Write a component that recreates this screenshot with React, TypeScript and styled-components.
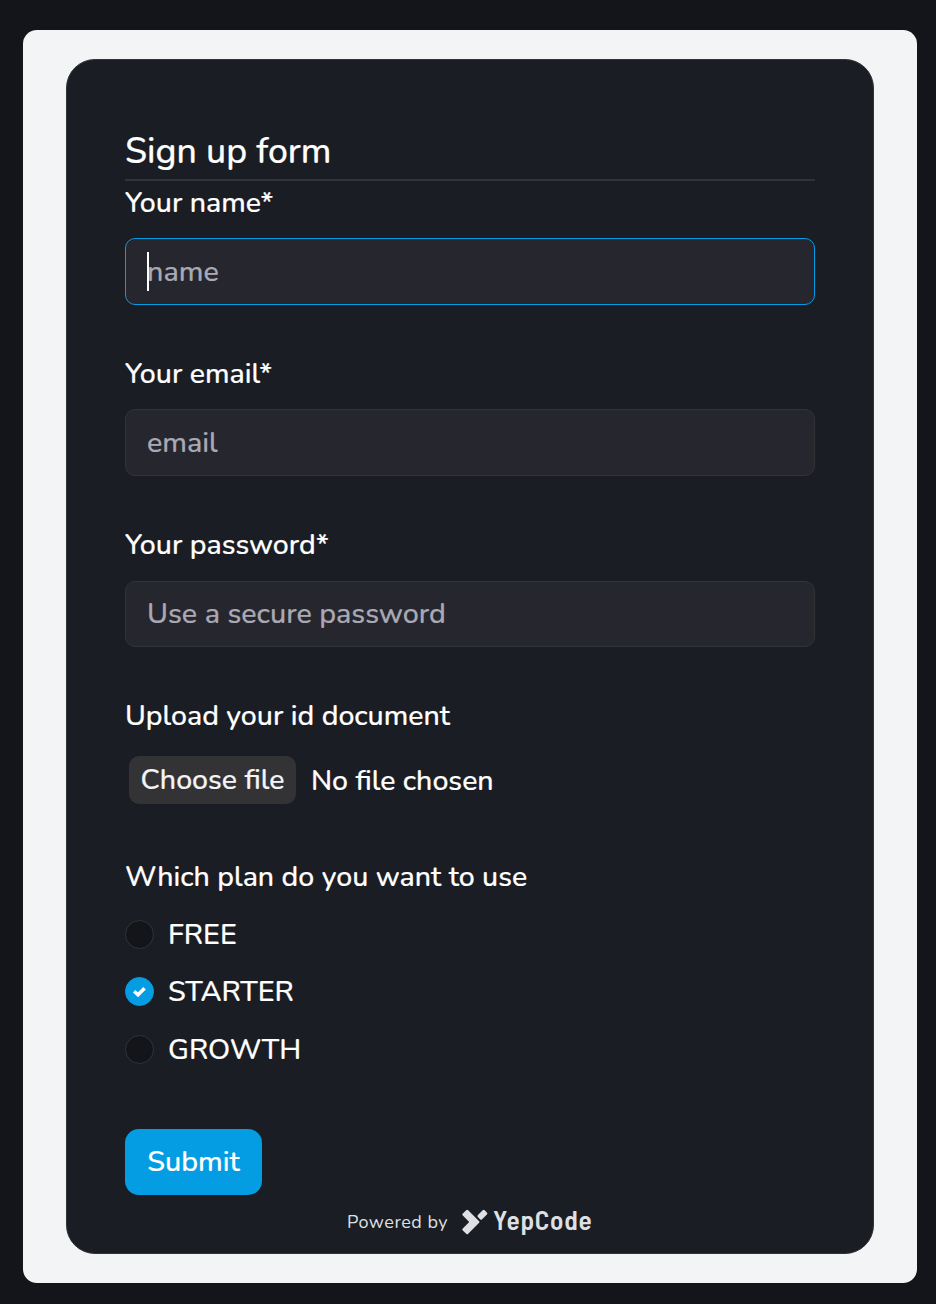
import React, { useState } from "react";
import styled, { createGlobalStyle } from "styled-components";

const GlobalStyle = createGlobalStyle`
  * { box-sizing: border-box; }
  body {
    margin: 0;
    background: #14151a;
    color: #fff;
    font-family: "Nunito", "Lato", sans-serif;
    font-weight: 500;
    -webkit-text-stroke: 0.2px currentColor;
  }
`;

const Page = styled.main`
  width: 936px;
  height: 1304px;
  padding: 30px 19px 21px 23px;
`;

const Panel = styled.div`
  height: 1253px;
  padding: 29px 43px;
  border-radius: 14px;
  background: #f3f4f6;
`;

const Card = styled.form`
  display: flex;
  flex-direction: column;
  height: 1195px;
  padding: 67px 58px 0;
  border: 1px solid #333335;
  border-radius: 29px;
  background: #1a1d24;
`;

const Title = styled.h1`
  height: 54px;
  margin: 0 0 2px;
  border-bottom: 2px solid #333335;
  font-size: 35.6px;
  font-weight: 500;
  line-height: 49px;
`;

const Field = styled.div<{ $after: number }>`
  display: flex;
  flex-direction: column;
  margin-bottom: ${(p) => p.$after}px;
`;

const Label = styled.label<{ $gap?: number }>`
  margin-bottom: ${(p) => p.$gap ?? 16}px;
  font-size: 28.5px;
  line-height: 39px;
`;

const Input = styled.div<{ $focused?: boolean; $height?: number }>`
  display: flex;
  align-items: flex-start;
  height: ${(p) => p.$height ?? 67}px;
  padding: ${(p) => (p.$height ? 12 : 13)}px 21px 0;
  border: 1px solid ${(p) => (p.$focused ? "#049ce2" : "#333335")};
  border-radius: 10px;
  background: #26262e;
  color: #a9a8b3;
  font-size: 28.7px;
  line-height: 39px;
`;

const Caret = styled.span`
  width: 2px;
  height: 39px;
  margin-right: -2px;
  background: #fff;
  z-index: 1;
`;

const FileRow = styled.div`
  display: flex;
  align-items: center;
  height: 48px;
  padding-left: 4px;
  font-size: 28.5px;
  line-height: 39px;
`;

const FileButton = styled.button`
  width: 167px;
  height: 48px;
  margin-right: 15px;
  padding: 0 0 1px;
  border: 0;
  border-radius: 10px;
  background: #333336;
  color: #f3f4f6;
  font: inherit;
  white-space: nowrap;
`;

const FileName = styled.span`
  padding-top: 1px;
`;

const Option = styled.div<{ $before: number }>`
  display: flex;
  align-items: center;
  gap: 14px;
  height: 39px;
  margin-top: ${(p) => p.$before}px;
  font-size: 28.7px;
  line-height: 39px;
  cursor: pointer;
`;

const Radio = styled.span<{ $checked: boolean }>`
  display: flex;
  align-items: center;
  justify-content: center;
  width: 29px;
  height: 29px;
  border: 1px solid ${(p) => (p.$checked ? "#049ce2" : "#333335")};
  border-radius: 50%;
  background: ${(p) => (p.$checked ? "#049ce2" : "#14151a")};
`;

const Submit = styled.button`
  width: 137px;
  height: 66px;
  margin-top: 60px;
  padding: 0 0 1px;
  border: 0;
  border-radius: 14px;
  background: #049ce2;
  color: #fff;
  font: inherit;
  font-size: 28.7px;
`;

const Footer = styled.footer`
  display: flex;
  align-items: center;
  height: 26px;
  margin-top: 14px;
  padding-left: 222px;
  color: #dfe0e3;
  -webkit-text-stroke: 0;
`;

const Powered = styled.span`
  width: 115px;
  font-size: 18px;
  font-weight: 400;
  letter-spacing: 0.5px;
  line-height: 26px;
`;

const Brand = styled.span`
  margin: -7px 0 0 5px;
  font-family: "Barlow Semi Condensed", "Barlow", "Roboto Condensed", sans-serif;
  font-size: 27.3px;
  font-weight: 600;
  letter-spacing: 0.75px;
  line-height: 26px;
`;

const plans = [
  { name: "FREE", before: 19 },
  { name: "STARTER", before: 18 },
  { name: "GROWTH", before: 19 },
];

const Check = () => (
  <svg width="15" height="15" viewBox="0 0 15 15" fill="none">
    <path d="M2.2 7.2 6 10.8 12.6 4.2" stroke="#fff" strokeWidth="3.5" />
  </svg>
);

const Logo = () => (
  <svg width="26" height="26" viewBox="0 0 26 26" fill="currentColor">
    <path d="M.8 4.6 4.2 1.2Q5.2.2 6.2 1.2L16.9 11.9Q18 13 16.9 14.1L6.2 24.8Q5.2 25.8 4.2 24.8L.8 21.4Q-.2 20.4.8 19.4L7.2 13 .8 6.6Q-.2 5.6.8 4.6Z" />
    <path d="M15.9 6.1 20.7 1.3Q21.7.3 22.7 1.3L24.9 3.5Q25.9 4.5 24.9 5.5L20.1 10.3Q19.1 11.3 18.1 10.3L15.9 8.1Q14.9 7.1 15.9 6.1Z" />
  </svg>
);

export default function App() {
  const [plan, setPlan] = useState("STARTER");
  return (
    <>
      <GlobalStyle />
      <Page>
        <Panel>
          <Card onSubmit={(e) => e.preventDefault()}>
            <Title>Sign up form</Title>
            <Field $after={49}>
              <Label>Your name*</Label>
              <Input $focused>
                <Caret />
                name
              </Input>
            </Field>
            <Field $after={49}>
              <Label>Your email*</Label>
              <Input>email</Input>
            </Field>
            <Field $after={49}>
              <Label $gap={17}>Your password*</Label>
              <Input $height={66}>Use a secure password</Input>
            </Field>
            <Field $after={53}>
              <Label $gap={21}>Upload your id document</Label>
              <FileRow>
                <FileButton type="button">Choose file</FileButton>
                <FileName>No file chosen</FileName>
              </FileRow>
            </Field>
            <Label $gap={0}>Which plan do you want to use</Label>
            {plans.map(({ name, before }) => (
              <Option key={name} $before={before} onClick={() => setPlan(name)}>
                <Radio $checked={plan === name}>{plan === name && <Check />}</Radio>
                {name}
              </Option>
            ))}
            <Submit type="submit">Submit</Submit>
            <Footer>
              <Powered>Powered by</Powered>
              <Logo />
              <Brand>YepCode</Brand>
            </Footer>
          </Card>
        </Panel>
      </Page>
    </>
  );
}
